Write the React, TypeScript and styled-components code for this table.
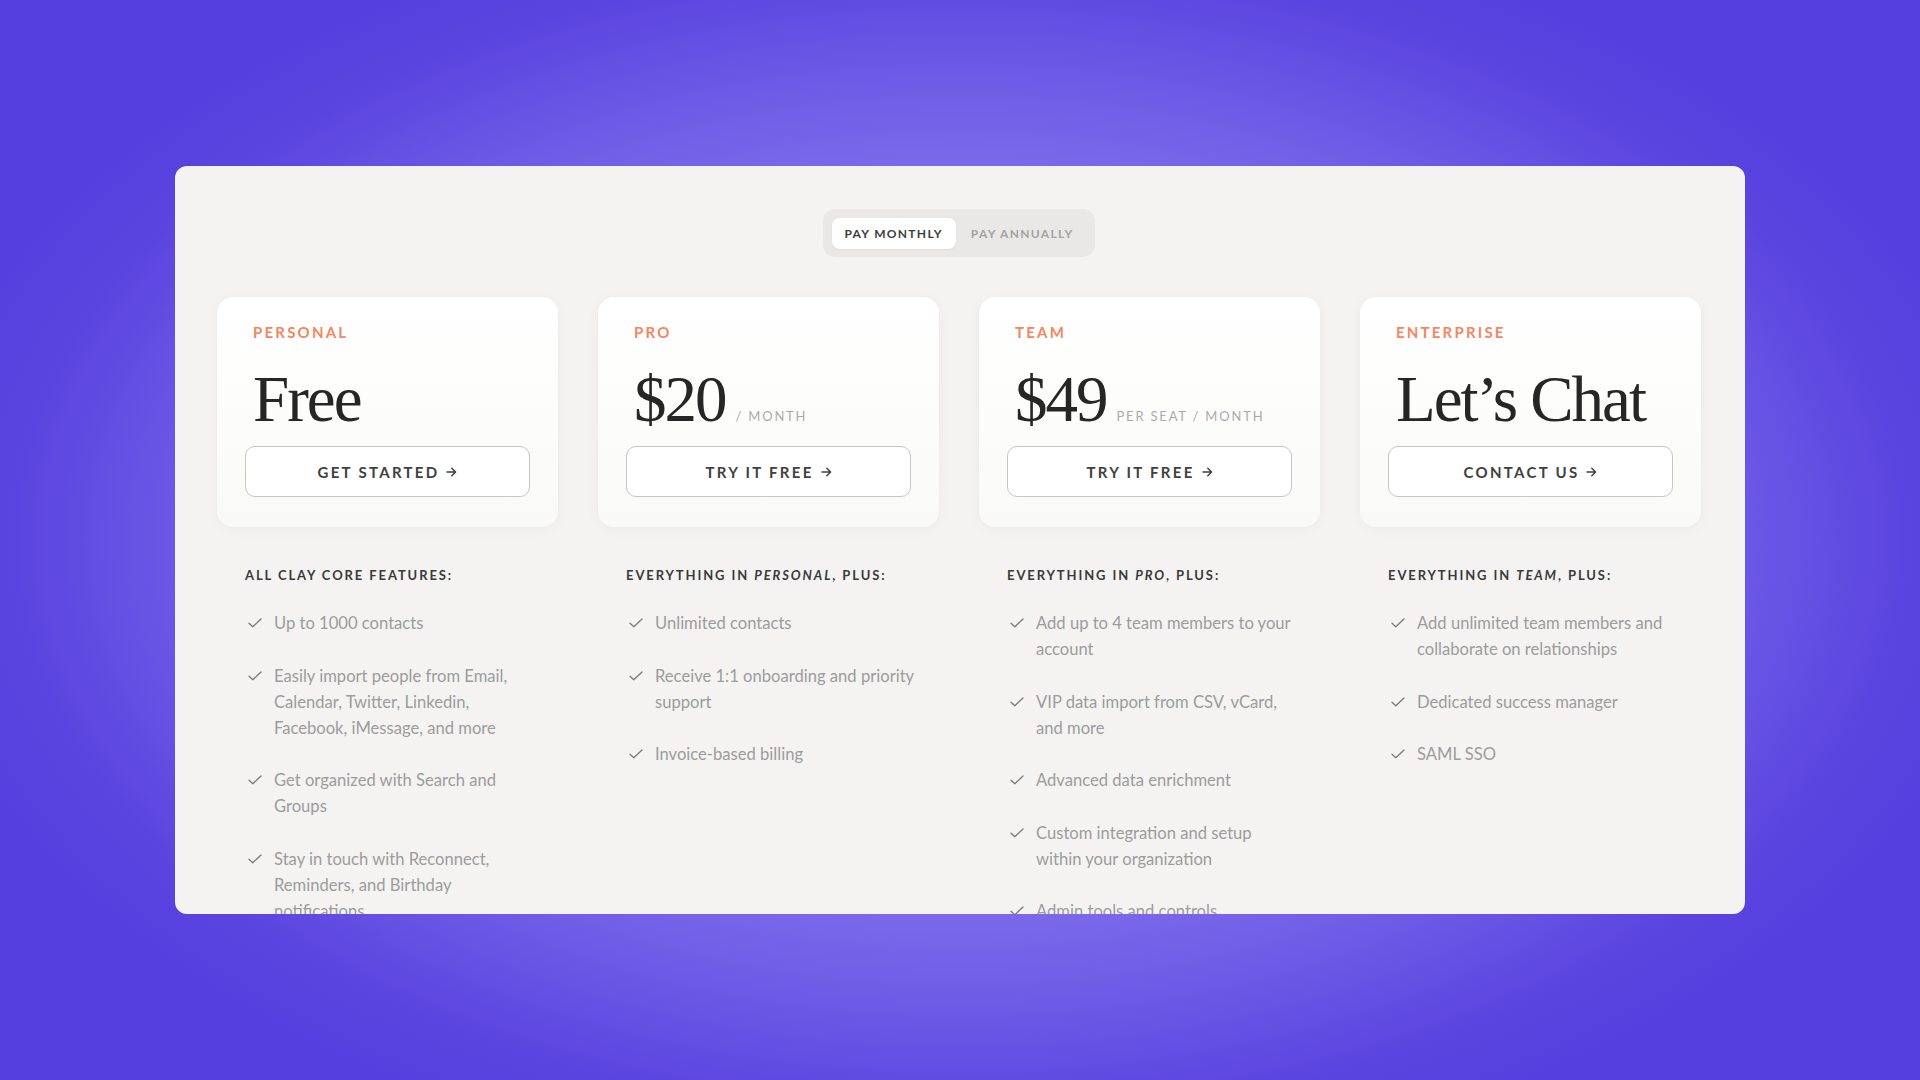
import React from "react";
import styled, { createGlobalStyle } from "styled-components";

const Global = createGlobalStyle`
  html, body { margin: 0; padding: 0; }
  body {
    font-family: Lato, "Noto Sans", sans-serif;
    background: #5540df;
  }
  * { box-sizing: border-box; }
`;

const Page = styled.div`
  width: 1920px;
  height: 1080px;
  display: flex;
  align-items: center;
  justify-content: center;
  background: radial-gradient(
    ellipse 1050px 640px at 50% 50%,
    #9a90f2 0%,
    #8677ee 45%,
    #705ee7 70%,
    #5b45e0 90%,
    #5540df 100%
  );
`;

const Panel = styled.div`
  width: 1570px;
  height: 748px;
  overflow: hidden;
  border-radius: 12px;
  background: #f4f3f1;
  padding: 43px 44px 0 42px;
  display: flex;
  flex-direction: column;
  align-items: center;
`;

const Toggle = styled.div`
  display: inline-flex;
  align-items: center;
  padding: 9px;
  height: 48px;
  border-radius: 12px;
  background: #e9e8e6;
`;

const Segment = styled.div<{ $active?: boolean }>`
  height: 31px;
  line-height: 31px;
  padding: 0 13px;
  margin-right: ${(p) => (p.$active ? "2px" : "0")};
  border-radius: 8px;
  font-size: 12px;
  font-weight: 700;
  letter-spacing: 1.3px;
  color: ${(p) => (p.$active ? "#3c3c3c" : "#a3a3a3")};
  background: ${(p) => (p.$active ? "#ffffff" : "transparent")};
  box-shadow: ${(p) => (p.$active ? "0 1px 2px rgba(0,0,0,0.05)" : "none")};
`;

const Grid = styled.div`
  margin-top: 40px;
  width: 100%;
  display: grid;
  grid-template-columns: repeat(4, minmax(0, 1fr));
  column-gap: 40px;
  align-items: start;
`;

const Column = styled.div`
  min-width: 0;
  display: flex;
  flex-direction: column;
`;

const Card = styled.div`
  padding: 26px 28px 30px;
  border-radius: 16px;
  background: linear-gradient(180deg, #ffffff 0%, #fdfdfc 45%, #f9f9f8 100%);
  box-shadow: 0 2px 14px rgba(60, 50, 40, 0.04), 0 0 0 1px rgba(0, 0, 0, 0.008);
  display: flex;
  flex-direction: column;
`;

const CardHead = styled.div`
  padding: 0 8px;
`;

const Tier = styled.div`
  font-size: 15px;
  line-height: 18px;
  font-weight: 700;
  letter-spacing: 2.2px;
  color: #f3875f;
`;

const PriceRow = styled.div`
  margin-top: 26px;
  height: 64px;
  display: flex;
  align-items: baseline;
  white-space: nowrap;
`;

const Amount = styled.span`
  font-family: "Liberation Serif", "DejaVu Serif", serif;
  font-size: 65px;
  line-height: 64px;
  letter-spacing: -2px;
  color: #262626;
`;

const Unit = styled.span`
  margin-left: 10px;
  font-size: 13px;
  font-weight: 400;
  letter-spacing: 1.8px;
  color: #ababab;
`;

const Button = styled.button`
  margin-top: 15px;
  height: 51px;
  width: 100%;
  border: 1px solid #c6c6c6;
  border-radius: 10px;
  background: #ffffff;
  display: flex;
  align-items: center;
  justify-content: center;
  gap: 7px;
  font-family: Lato, "Noto Sans", sans-serif;
  font-size: 15px;
  font-weight: 700;
  letter-spacing: 2.3px;
  color: #404040;
  cursor: pointer;
`;

const Features = styled.div`
  padding: 40px 28px 0;
`;

const FeatureHeading = styled.div`
  font-size: 13px;
  line-height: 16px;
  font-weight: 700;
  letter-spacing: 1.9px;
  color: #3a3a3a;
  white-space: nowrap;

  em {
    font-style: italic;
  }
`;

const List = styled.ul`
  list-style: none;
  margin: 27px 0 0;
  padding: 0;
  display: flex;
  flex-direction: column;
  gap: 26.5px;
`;

const Item = styled.li`
  display: flex;
  align-items: flex-start;
  gap: 12px;
  padding-left: 3px;
  font-size: 16.6px;
  line-height: 26px;
  color: #9c9c9c;
  white-space: pre;
`;

const CheckWrap = styled.span`
  flex: none;
  width: 14px;
  height: 10px;
  margin-top: 8px;
  display: flex;
`;

const Check = () => (
  <CheckWrap>
    <svg width="14" height="10" viewBox="0 0 14 10" fill="none">
      <path d="M1 5.2 L4.8 8.8 L13 1" stroke="#7a7a7a" strokeWidth="1.3" strokeLinecap="round" strokeLinejoin="round" />
    </svg>
  </CheckWrap>
);

const Arrow = () => (
  <svg width="11" height="10" viewBox="0 0 11 10" fill="none">
    <path d="M1 5 H9.5 M5.8 1.2 L9.6 5 L5.8 8.8" stroke="#404040" strokeWidth="1.5" strokeLinecap="round" strokeLinejoin="round" />
  </svg>
);

type Plan = {
  tier: string;
  amount: string;
  unit?: string;
  cta: string;
  heading: React.ReactNode;
  features: string[];
};

const plans: Plan[] = [
  {
    tier: "PERSONAL",
    amount: "Free",
    cta: "GET STARTED",
    heading: <>ALL CLAY CORE FEATURES:</>,
    features: [
      "Up to 1000 contacts",
      "Easily import people from Email,\nCalendar, Twitter, Linkedin,\nFacebook, iMessage, and more",
      "Get organized with Search and\nGroups",
      "Stay in touch with Reconnect,\nReminders, and Birthday\nnotifications",
    ],
  },
  {
    tier: "PRO",
    amount: "$20",
    unit: "/ MONTH",
    cta: "TRY IT FREE",
    heading: (
      <>
        EVERYTHING IN <em>PERSONAL</em>, PLUS:
      </>
    ),
    features: [
      "Unlimited contacts",
      "Receive 1:1 onboarding and priority\nsupport",
      "Invoice-based billing",
    ],
  },
  {
    tier: "TEAM",
    amount: "$49",
    unit: "PER SEAT / MONTH",
    cta: "TRY IT FREE",
    heading: (
      <>
        EVERYTHING IN <em>PRO</em>, PLUS:
      </>
    ),
    features: [
      "Add up to 4 team members to your\naccount",
      "VIP data import from CSV, vCard,\nand more",
      "Advanced data enrichment",
      "Custom integration and setup\nwithin your organization",
      "Admin tools and controls",
    ],
  },
  {
    tier: "ENTERPRISE",
    amount: "Let\u2019s Chat",
    cta: "CONTACT US",
    heading: (
      <>
        EVERYTHING IN <em>TEAM</em>, PLUS:
      </>
    ),
    features: [
      "Add unlimited team members and\ncollaborate on relationships",
      "Dedicated success manager",
      "SAML SSO",
    ],
  },
];

export default function App() {
  return (
    <>
      <Global />
      <Page>
        <Panel>
          <Toggle>
            <Segment $active>PAY MONTHLY</Segment>
            <Segment>PAY ANNUALLY</Segment>
          </Toggle>
          <Grid>
            {plans.map((p) => (
              <Column key={p.tier}>
                <Card>
                  <CardHead>
                    <Tier>{p.tier}</Tier>
                    <PriceRow>
                      <Amount>{p.amount}</Amount>
                      {p.unit && <Unit>{p.unit}</Unit>}
                    </PriceRow>
                  </CardHead>
                  <Button>
                    {p.cta}
                    <Arrow />
                  </Button>
                </Card>
                <Features>
                  <FeatureHeading>{p.heading}</FeatureHeading>
                  <List>
                    {p.features.map((f) => (
                      <Item key={f}>
                        <Check />
                        <span>{f}</span>
                      </Item>
                    ))}
                  </List>
                </Features>
              </Column>
            ))}
          </Grid>
        </Panel>
      </Page>
    </>
  );
}
